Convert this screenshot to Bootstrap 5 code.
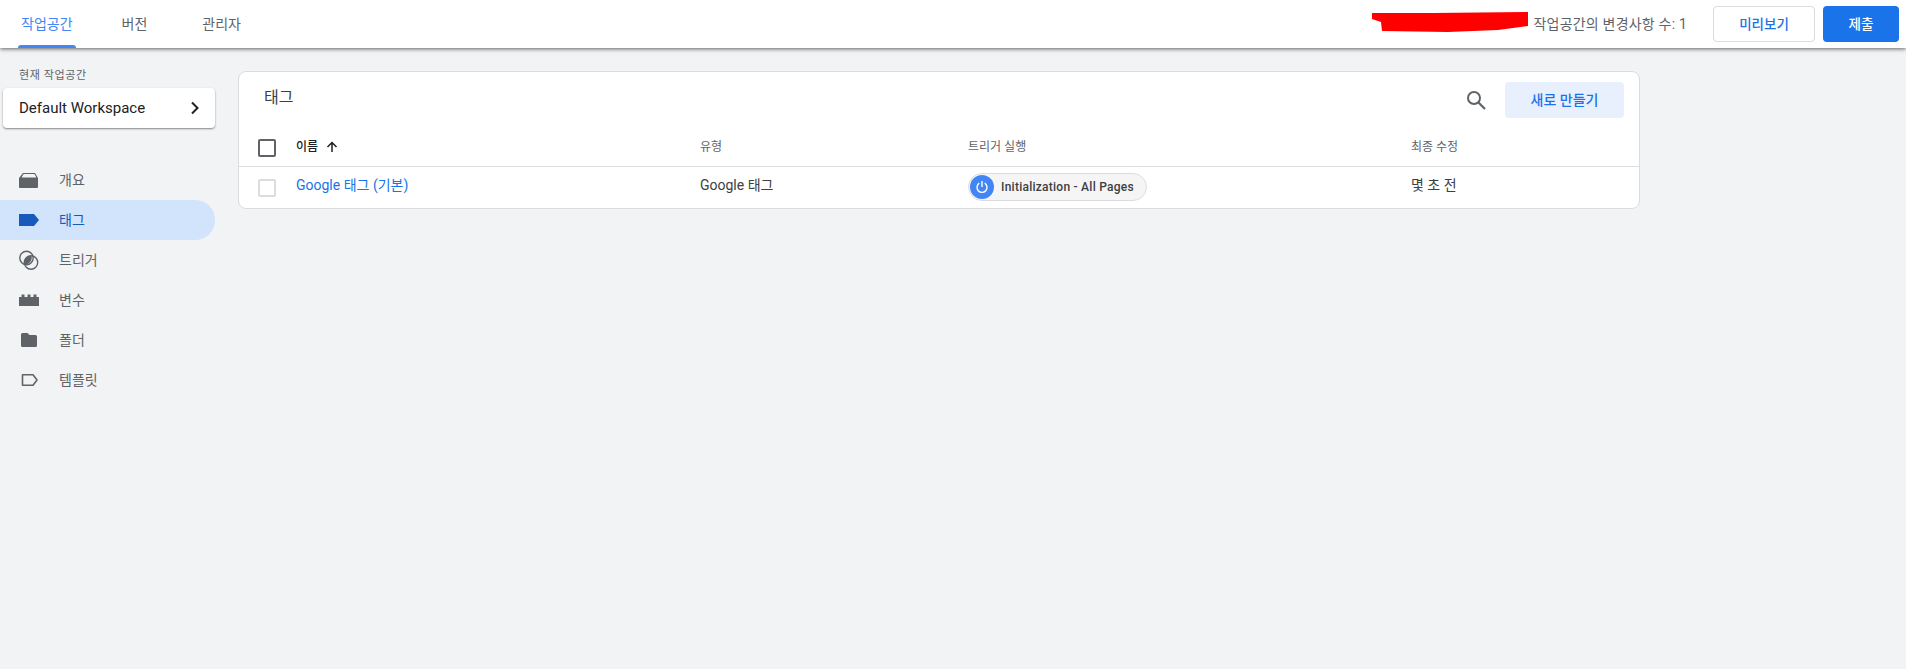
<!DOCTYPE html>
<html lang="ko">
<head>
    <meta charset="UTF-8">
    <title>태그</title>
    <link href="https://cdn.jsdelivr.net/npm/bootstrap@5.3.0/dist/css/bootstrap.min.css" rel="stylesheet">
    <style>
        body { background: #f1f3f4; font-family: Roboto, "Noto Sans CJK KR", sans-serif; color: #3c4043; font-size: 14px; min-height: 669px; }
        .top-bar { height: 48px; background: #fff; box-shadow: 0 1px 4px rgba(0,0,0,.6); position: relative; z-index: 2; padding-left: 18px; }
        .top-tab { height: 48px; display: flex; align-items: center; padding: 0 3px; color: #5f6368; text-decoration: none; font-size: 14px; position: relative; margin-right: 43px; }
        .top-tab.tab-last { margin-left: 6px; }
        .top-tab.is-on { color: #4285f4; }
        .top-tab.is-on::after { content: ""; position: absolute; left: 0; right: 0; bottom: 0; height: 3px; background: #4285f4; border-radius: 3px 3px 0 0; }
        .changes { font-size: 14px; letter-spacing: .2px; color: #5f6368; margin-right: 26px; }
        .scribble { width: 156px; height: 20px; margin-right: 6px; margin-bottom: 4px; }
        .btn-preview, .btn-submit { height: 36px; font-size: 13.5px; font-weight: 500; padding: 0; border-radius: 4px; }
        .btn-preview { width: 102px; background: #fff; border: 1px solid #dadce0; color: #1a73e8; margin-right: 8px; }
        .btn-submit { width: 76px; background: #1a73e8; border: 0; color: #fff; margin-right: 7px; }
        .side-col { width: 238px; flex: none; padding-top: 21px; }
        .ws-label { font-size: 11px; letter-spacing: .6px; color: #5f6368; padding-left: 19px; line-height: 14px; margin-bottom: 5px; }
        .ws-card { margin-left: 3px; width: 212px; height: 40px; background: #fff; border-radius: 4px; box-shadow: 0 1px 2px rgba(0,0,0,.45); padding: 0 15px 0 16px; color: #202124; font-size: 15px; margin-bottom: 32px; }
        .side-item { height: 40px; width: 215px; padding-left: 19px; color: #5f6368; font-size: 14px; text-decoration: none; border-radius: 0 20px 20px 0; }
        .side-item svg { width: 20px; height: 20px; margin-right: 20px; flex: none; }
        .side-item.is-on { background: #d2e3fc; color: #185abc; }
        .tag-card { margin-top: 23px; width: 1402px; height: 138px; background: #fff; border: 1px solid #dadce0; border-radius: 8px; overflow: hidden; }
        .tag-head { height: 67px; padding: 10px 15px 0 25px; }
        .tag-title { font-size: 16px; color: #3c4043; margin-top: 4px; }
        .tag-search { margin-top: 7px; margin-right: 18px; }
        .btn-new { width: 119px; height: 36px; background: #e8f0fe; color: #1a73e8; border: 0; border-radius: 4px; font-size: 14px; font-weight: 500; padding: 0; }
        .tag-cols { height: 27px; font-size: 12px; line-height: 16px; color: #5f6368; border-bottom: 1px solid #dadce0; box-sizing: content-box; }
        .tag-row { height: 41px; font-size: 14px; }
        .cell-lift { padding-bottom: 4px; }
        .cell-check { width: 57px; padding-left: 19px; flex: none; }
        .cell-name { width: 404px; flex: none; }
        .cell-type { width: 268px; flex: none; }
        .cell-trigger { width: 443px; flex: none; }
        .box { display: block; width: 18px; height: 18px; border: 2px solid #5f6368; border-radius: 2px; }
        .box.is-off { border-color: #dadce0; }
        .name-sort { color: #202124; font-weight: 500; }
        .tag-link { color: #1a73e8; text-decoration: none; }
        .chip { height: 28px; width: 179px; background: #f5f5f5; border: 1px solid #dadce0; border-radius: 14px; padding-left: 1px; font-size: 12px; letter-spacing: .25px; font-weight: 500; color: #3c4043; white-space: nowrap; margin-bottom: 2px; }
        .chip-dot { width: 24px; height: 24px; border-radius: 50%; background: #4285f4; margin-right: 7px; flex: none; }
    </style>
</head>
<body>
    <header class="top-bar d-flex align-items-center">
        <a class="top-tab is-on" href="#">작업공간</a>
        <a class="top-tab" href="#">버전</a>
        <a class="top-tab tab-last" href="#">관리자</a>
        <div class="ms-auto d-flex align-items-center">
            <svg class="scribble" viewBox="0 0 156 20"><path d="M0 1 L60 1 L156 0 L156 14 L126 18 L76 20 L10 19 L9 10 L0 7 Z" fill="#f00"/></svg>
            <span class="changes">작업공간의 변경사항 수: 1</span>
            <button class="btn btn-preview">미리보기</button>
            <button class="btn btn-submit">제출</button>
        </div>
    </header>

    <div class="d-flex">
        <nav class="side-col">
            <div class="ws-label">현재 작업공간</div>
            <div class="ws-card d-flex align-items-center justify-content-between">
                <span>Default Workspace</span>
                <svg width="10" height="14" viewBox="0 0 10 14"><path d="M2 1.500 L7.500 7 L2 12.500" fill="none" stroke="#202124" stroke-width="2"/></svg>
            </div>
            <a class="side-item d-flex align-items-center" href="#">
                <svg viewBox="0 0 20 20"><path d="M4 3h12l3 5v9a1 1 0 0 1-1 1H1a1 1 0 0 1-1-1V8z" fill="#5f6368"/><path d="M4.600 4h10.800l2 3.400H2.600z" fill="#f1f3f4"/></svg>개요
            </a>
            <a class="side-item is-on d-flex align-items-center" href="#">
                <svg viewBox="0 0 20 20"><path d="M0 4h15l5 6-5 6H0z" fill="#185abc"/></svg>태그
            </a>
            <a class="side-item d-flex align-items-center" href="#">
                <svg viewBox="0 0 20 20"><circle cx="7.500" cy="8" r="6.700" fill="none" stroke="#5f6368" stroke-width="1.400"/><circle cx="12" cy="12.500" r="6.700" fill="none" stroke="#5f6368" stroke-width="1.400"/><path d="M12.500 5.900a6.700 6.700 0 0 1-7 8.500 6.700 6.700 0 0 1 7-8.500z" fill="#5f6368"/></svg>트리거
            </a>
            <a class="side-item d-flex align-items-center" href="#">
                <svg viewBox="0 0 20 20"><path d="M0 7h2.500V4.500h3V7h3V4.500h3V7h3V4.500h3V7H20v9H0z" fill="#5f6368"/></svg>변수
            </a>
            <a class="side-item d-flex align-items-center" href="#">
                <svg viewBox="0 0 20 20"><path d="M3.500 3h5l2 2h6a1.500 1.500 0 0 1 1.500 1.500v9a1.500 1.500 0 0 1-1.500 1.500h-13A1.500 1.500 0 0 1 2 15.500v-11A1.500 1.500 0 0 1 3.500 3z" fill="#5f6368"/></svg>폴더
            </a>
            <a class="side-item d-flex align-items-center" href="#">
                <svg viewBox="0 0 20 20"><path d="M3.500 4.800h10.500l4 5.200-4 5.200H3.500z" fill="none" stroke="#5f6368" stroke-width="1.600" stroke-linejoin="round"/></svg>템플릿
            </a>
        </nav>

        <main>
            <section class="tag-card">
                <div class="tag-head d-flex">
                    <div class="tag-title">태그</div>
                    <div class="ms-auto d-flex align-items-start">
                        <svg class="tag-search" width="22" height="22" viewBox="0 0 22 22"><circle cx="9" cy="9" r="6" fill="none" stroke="#5f6368" stroke-width="2"/><path d="M13.500 13.500 L20 20" stroke="#5f6368" stroke-width="2.200"/></svg>
                        <button class="btn btn-new">새로 만들기</button>
                    </div>
                </div>
                <div class="tag-cols d-flex align-items-start">
                    <div class="cell-check"><span class="box"></span></div>
                    <div class="cell-name name-sort d-flex align-items-center gap-2">이름
                        <svg width="12" height="12" viewBox="0 0 12 12"><path d="M6 11V2M1.500 6 L6 1.500 L10.500 6" fill="none" stroke="#202124" stroke-width="1.500"/></svg>
                    </div>
                    <div class="cell-type">유형</div>
                    <div class="cell-trigger">트리거 실행</div>
                    <div>최종 수정</div>
                </div>
                <div class="tag-row d-flex align-items-center">
                    <div class="cell-check"><span class="box is-off"></span></div>
                    <div class="cell-name cell-lift"><a class="tag-link" href="#">Google 태그 (기본)</a></div>
                    <div class="cell-type cell-lift">Google 태그</div>
                    <div class="cell-trigger d-flex">
                        <span class="chip d-inline-flex align-items-center">
                            <span class="chip-dot d-flex align-items-center justify-content-center">
                                <svg width="14" height="14" viewBox="0 0 14 14"><path d="M4.300 3.200a5 5 0 1 0 5.400 0" fill="none" stroke="#fff" stroke-width="1.400"/><path d="M7 1v6" stroke="#fff" stroke-width="1.400"/></svg>
                            </span>Initialization - All Pages
                        </span>
                    </div>
                    <div class="cell-lift">몇 초 전</div>
                </div>
            </section>
        </main>
    </div>
</body>
</html>
